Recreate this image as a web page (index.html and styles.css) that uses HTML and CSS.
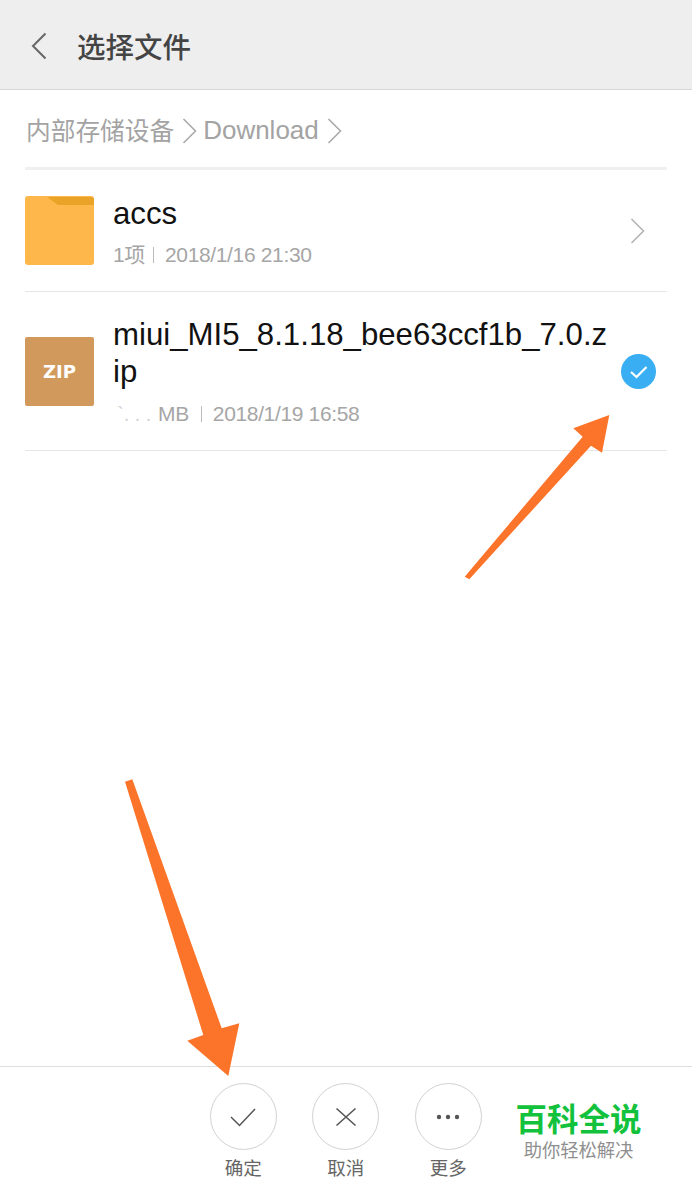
FILE: index.html
```html
<!DOCTYPE html>
<html lang="zh-CN">
<head>
<meta charset="utf-8">
<title>选择文件</title>
<link rel="stylesheet" href="styles.css">
</head>
<body>
<div class="page">
  <header class="topbar">
    <svg class="back" width="18" height="28" viewBox="0 0 18 28"><path d="M15.500 1.500 3 14l12.500 12.500" fill="none" stroke="#666" stroke-width="2"/></svg>
    <h1 class="title">选择文件</h1>
  </header>
  <nav class="crumbs">
    <span class="crumb-cjk">内部存储设备</span>
    <svg class="crumb-sep" width="15" height="26" viewBox="0 0 15 26"><path d="M1.500 1 13.500 13 1.500 25" fill="none" stroke="#aaa" stroke-width="1.600"/></svg>
    <span class="crumb-lat">Download</span>
    <svg class="crumb-sep" width="15" height="26" viewBox="0 0 15 26"><path d="M1.500 1 13.500 13 1.500 25" fill="none" stroke="#aaa" stroke-width="1.600"/></svg>
  </nav>
  <main class="list">
    <div class="row row-folder">
      <svg class="thumb" width="69" height="69" viewBox="0 0 69 69">
        <rect width="69" height="69" rx="3" fill="#fdb74a"/>
        <path d="M22 1h44a3 3 0 0 1 3 3v5H33z" fill="#eba327"/>
      </svg>
      <div class="info">
        <div class="name">accs</div>
        <div class="meta"><span>1项</span><i class="bar"></i><span>2018/1/16 21:30</span></div>
      </div>
      <svg class="chev" width="15" height="26" viewBox="0 0 15 26"><path d="M1.500 1 13.500 13 1.500 25" fill="none" stroke="#b4b4b4" stroke-width="1.600"/></svg>
    </div>
    <div class="row row-file">
      <div class="zip">ZIP</div>
      <div class="info">
        <div class="name">miui_MI5_8.1.18_bee63ccf1b_7.0.z<br>ip</div>
        <div class="meta"><span class="smudge">`. . .</span><span>MB</span><i class="bar"></i><span>2018/1/19 16:58</span></div>
      </div>
      <svg class="tick" width="35" height="35" viewBox="0 0 35 35"><circle cx="17.500" cy="17.500" r="17.500" fill="#39aef2"/><path d="M10 18l5.500 5L25.500 13" fill="none" stroke="#fff" stroke-width="2.200"/></svg>
    </div>
  </main>
  <footer class="actions">
    <div class="action">
      <div class="circle"><svg width="28" height="22" viewBox="0 0 28 22"><path d="M2 11l8.500 8.500L26 3" fill="none" stroke="#555" stroke-width="1.500"/></svg></div>
      <span class="label">确定</span>
    </div>
    <div class="action">
      <div class="circle"><svg width="22" height="22" viewBox="0 0 22 22"><path d="M1.500 2.500l19 17M20.500 2.500l-19 17" fill="none" stroke="#555" stroke-width="1.600"/></svg></div>
      <span class="label">取消</span>
    </div>
    <div class="action">
      <div class="circle"><svg width="24" height="6" viewBox="0 0 24 6"><circle cx="3" cy="3" r="2.200" fill="#555"/><circle cx="12" cy="3" r="2.200" fill="#555"/><circle cx="21" cy="3" r="2.200" fill="#555"/></svg></div>
      <span class="label">更多</span>
    </div>
  </footer>
  <div class="brand">
    <div class="brand-name">百科全说</div>
    <div class="brand-sub">助你轻松解决</div>
  </div>
  <svg class="arrows" width="692" height="1194" viewBox="0 0 692 1194">
    <path fill="#fb7429" d="M464.700 576.700 582.700 436.700 573.300 428.300 609.300 415 602 452.700 591 445.700 469.300 579.300Z"/>
    <path fill="#fb7429" d="M125 781.700 132.300 779.300 221.700 1028.300 239.300 1023.300 228.300 1076 187.300 1040.700 203.300 1035Z"/>
  </svg>
</div>
</body>
</html>
```
FILE: styles.css
```css
* { box-sizing: border-box; }
html, body { margin: 0; padding: 0; background: #fff; }
.page {
  position: relative;
  width: 692px;
  height: 1194px;
  overflow: hidden;
  display: flex;
  flex-direction: column;
  font-family: "Liberation Sans", "Noto Sans CJK SC", sans-serif;
}
.topbar {
  height: 90px;
  flex: none;
  background: #eeeeee;
  border-bottom: 1px solid #d6d6d6;
  display: flex;
  align-items: center;
  padding-left: 30px;
}
.back { flex: none; margin-top: 2px; }
.title {
  margin: 6px 0 0 29px;
  font-size: 28.500px;
  font-weight: 500;
  color: #444;
  line-height: 40px;
}
.crumbs {
  height: 80px;
  flex: none;
  margin: 0 25px;
  border-bottom: 3px solid #f0f0f0;
  display: flex;
  align-items: center;
  color: #a3a3a3;
  padding: 4px 0 0 1px;
}
.crumb-cjk { font-size: 24.700px; margin-top: -3px; }
.crumb-lat { font-size: 26px; margin-left: -1px; }
.crumb-sep { margin: 0 7px 0 8px; }
.list { flex: 1; margin: 0 25px; }
.row {
  display: flex;
  align-items: center;
  border-bottom: 1px solid #e6e6e6;
}
.row-folder { height: 122px; }
.row-file { height: 159px; }
.thumb { flex: none; }
.zip {
  flex: none;
  width: 69px;
  height: 69px;
  border-radius: 2px;
  background: #d19a5c;
  color: #fff;
  font-family: "DejaVu Sans", sans-serif;
  font-size: 18px;
  font-weight: 700;
  display: flex;
  align-items: center;
  justify-content: center;
}
.info { flex: 1; margin-left: 19px; min-width: 0; }
.name {
  font-size: 31.200px;
  line-height: 37px;
  color: #111;
  white-space: nowrap;
}
.meta {
  display: flex;
  align-items: center;
  font-size: 21px;
  line-height: 28px;
  color: #a6a6a6;
  margin-top: 9px;
  letter-spacing: -0.350px;
}
.row-folder .info { margin-top: 3px; }
.row-file .info { margin-top: 1px; }
.row-file .meta { margin-top: 10px; }
.bar { width: 1px; height: 16px; background: #bbb; margin: 0 10px; }
.row-folder .bar { margin: 0 11px 0 8px; }
.row-file .bar { margin: 0 11px 0 12px; }
.smudge { width: 45px; padding-left: 4px; color: #d4d4d4; white-space: pre; }
.chev { flex: none; margin: 0 22px 0 0; }
.tick { flex: none; margin: 0 11px 0 0; }
.actions {
  flex: none;
  height: 128px;
  border-top: 1px solid #dedede;
  display: flex;
  padding: 16px 0 0 192px;
}
.action {
  width: 102.500px;
  display: flex;
  flex-direction: column;
  align-items: center;
}
.circle {
  width: 67px;
  height: 67px;
  border: 1px solid #d2d2d2;
  border-radius: 50%;
  display: flex;
  align-items: center;
  justify-content: center;
}
.label {
  margin-top: 5px;
  font-size: 18.500px;
  line-height: 27px;
  color: #666;
}
.brand {
  position: absolute;
  left: 515px;
  top: 1101px;
  width: 127px;
  text-align: center;
}
.brand-name {
  font-size: 31.500px;
  line-height: 38px;
  font-weight: 700;
  color: #12c13c;
  white-space: nowrap;
}
.brand-sub {
  font-size: 18.300px;
  line-height: 24px;
  color: #8f8f8f;
  white-space: nowrap;
}
.arrows { position: absolute; left: 0; top: 0; pointer-events: none; }
```
